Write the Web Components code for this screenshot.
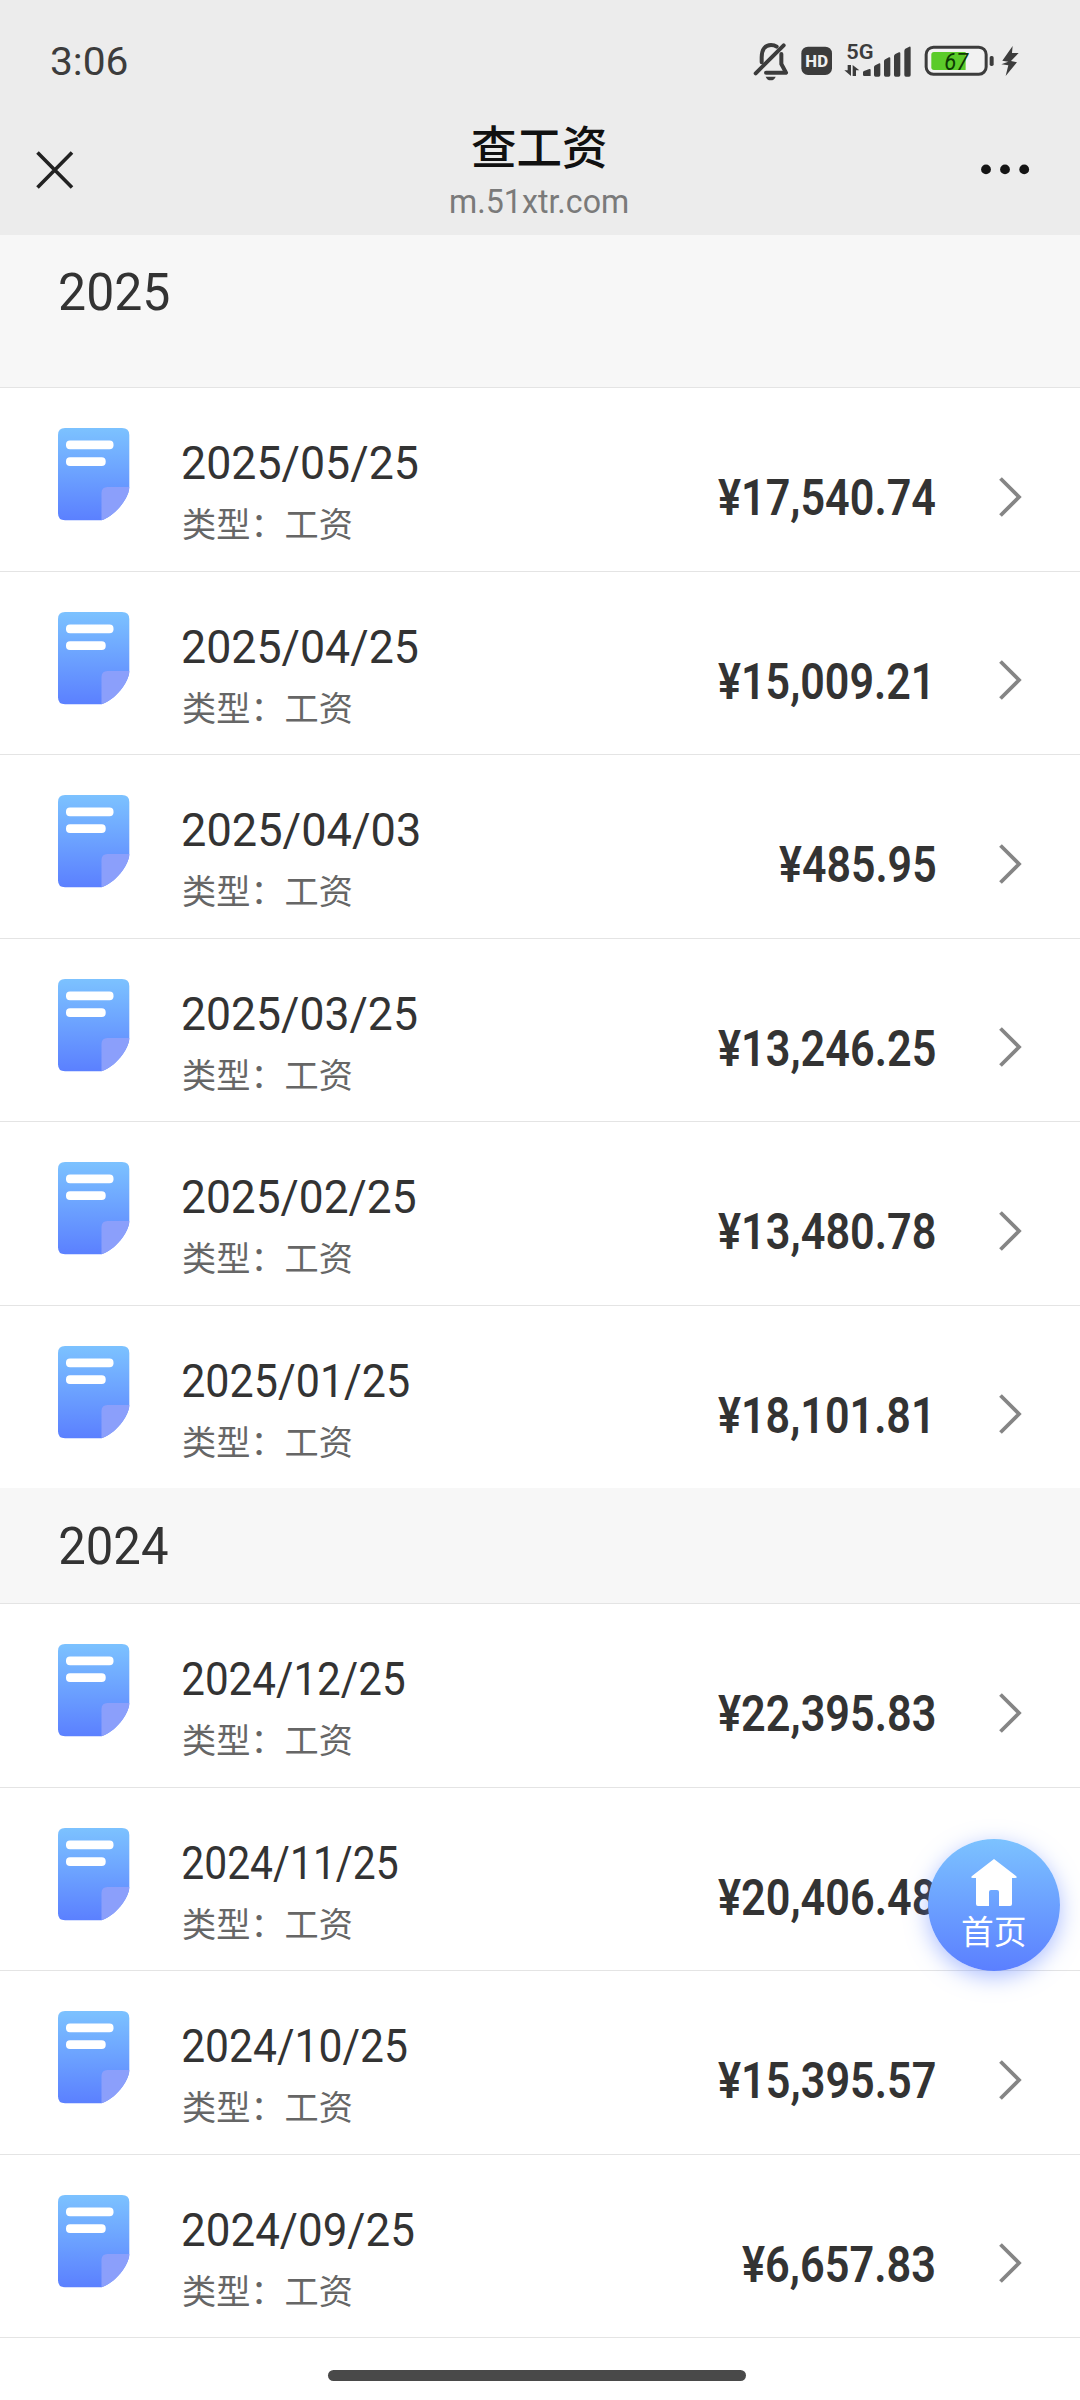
<!DOCTYPE html>
<html lang="zh-CN">
<head>
<meta charset="utf-8">
<title>查工资</title>
<style>
body{margin:0;background:#fff;width:1080px;height:2400px;overflow:hidden;font-family:Roboto,"Noto Sans CJK SC",sans-serif;color:#333}
</style>
</head>
<body>
<salary-app></salary-app>
<script>
const define=(name,html,setup)=>{
  const t=document.createElement('template');t.innerHTML=html;
  customElements.define(name,class extends HTMLElement{
    connectedCallback(){
      if(this.shadowRoot)return;
      this.attachShadow({mode:'open'}).append(t.content.cloneNode(true));
      if(setup)setup(this,this.shadowRoot);
    }
  });
};

/* Text whose visible ink is set to an exact width, starting at the box's left edge. */
const ctx=document.createElement('canvas').getContext('2d');
define('fit-text',`<style>:host{display:block;white-space:nowrap}span{display:inline-block;transform-origin:0 50%}</style><span><slot></slot></span>`,(el,root)=>{
  const cs=getComputedStyle(el);
  ctx.font=`${cs.fontWeight} ${cs.fontSize} ${cs.fontFamily}`;
  const m=ctx.measureText(el.textContent);
  const w=+el.getAttribute('width');
  const k=w/(m.actualBoundingBoxLeft+m.actualBoundingBoxRight);
  el.style.width=w+'px';
  root.querySelector('span').style.transform=`translateX(${m.actualBoundingBoxLeft*k}px) scaleX(${k})`;
});

define('status-bar',`<style>
:host{display:flex;justify-content:space-between;align-items:flex-start;height:104px;box-sizing:border-box;padding:40px 60px 0 50.5px;color:#3c3c3c}
fit-text{font-size:39px;line-height:44px;font-weight:450}
svg{display:block}
</style>
<fit-text width="76.5">3:06</fit-text>
<svg width="266.67" height="43.33" viewBox="100 60 800 130" fill="#3c3c3c">
<g fill="none" stroke="#3c3c3c" stroke-width="12" stroke-linecap="round" stroke-linejoin="round">
<path d="M108 160L192 76"/><path d="M126 127V112C126 86 138 75 154 75Q164 75 171 80M185 102V132L199 158H139"/></g>
<path d="M138 170H168Q164 181 153 181Q142 181 138 170Z"/>
<rect x="245" y="80" width="92" height="85" rx="20"/>
<text x="291" y="140" fill="#efefef" font-size="48" font-weight="800" text-anchor="middle" textLength="68" lengthAdjust="spacingAndGlyphs">HD</text>
<text x="380" y="116" font-size="60" font-weight="600" textLength="82" lengthAdjust="spacingAndGlyphs">5G</text>
<path d="M384 135H394V168L374 151H384ZM399 168V135L419 151H409V168Z"/>
<path d="M430 157Q430 154 433 153L449 147Q453 146 453 150V168H434Q430 168 430 165ZM463 142Q463 138 467 136L479 130Q482 129 482 133V165Q482 170 477 170H468Q463 170 463 165ZM493 124Q493 120 497 118L508 112Q512 111 512 115V165Q512 170 507 170H498Q493 170 493 165ZM523 109Q523 105 527 102L538 97Q542 96 542 100V165Q542 170 537 170H528Q523 170 523 165ZM554 93Q554 89 557 86L569 80Q573 79 573 83V165Q573 170 568 170H559Q554 170 554 165Z"/>
<rect x="619.5" y="81.5" width="180" height="81.5" rx="22" fill="#f2f2f2" stroke="#3c3c3c" stroke-width="9"/>
<path d="M643 96H738V150H643Q635 150 635 142V104Q635 96 643 96Z" fill="#5bcb2a"/>
<rect x="810" y="108" width="12" height="30" rx="5"/>
<text x="674" y="150" font-size="72" font-weight="400" font-style="italic" fill="#0d3a04" textLength="72" lengthAdjust="spacingAndGlyphs">67</text>
<path d="M879 78L848 122L866 125L845 133L866 136L858 168L892 127L874 123L897 99H877Z"/>
</svg>`);

define('nav-bar',`<style>
:host{display:flex;justify-content:space-between;align-items:flex-start;height:130.5px;box-sizing:border-box;padding:0 50px 0 36px}
svg{display:block}.c{margin-top:46.500px;width:108px}.m{margin-top:60px;margin-left:46px}
div{display:flex;flex-direction:column;align-items:center}
.t{font-size:46px;line-height:60px;font-weight:500;color:#111;margin-top:14px}
.u{font-size:34px;line-height:40px;color:#7a7a7a;margin-top:3px}
</style>
<svg class="c" width="108" height="38" viewBox="0 0 108 38"><path d="M1.5 1.5L36 36.5M36 1.5L1.5 36.5" stroke="#222" stroke-width="3.6" fill="none"/></svg>
<div><fit-text class="t" width="133.5">查工资</fit-text><fit-text class="u" width="176.500">m.51xtr.com</fit-text></div>
<svg class="m" width="50" height="11" viewBox="0 0 50 11" fill="#151515"><circle cx="6" cy="5.4" r="4.9"/><circle cx="25" cy="5.4" r="4.9"/><circle cx="44.2" cy="5.4" r="4.9"/></svg>`);

define('year-head',`<style>
:host{display:block;box-sizing:border-box;background:#f7f7f7;padding-left:59.5px;height:115px;padding-top:28px}
:host([first]){height:152.5px;padding-top:27px}
fit-text{font-size:52.5px;line-height:60px}
</style><div></div>`,(el,root)=>{
  root.querySelector('div').innerHTML=`<fit-text width="${el.getAttribute('w')}">${el.getAttribute('year')}</fit-text>`;
});

define('doc-icon',`<style>:host,svg{display:block}</style>
<svg width="72" height="93" viewBox="0 0 72 93"><defs><linearGradient id="g" x2="0" y2="1"><stop stop-color="#7cc2ff"/><stop offset="1" stop-color="#5b80ff"/></linearGradient></defs>
<path d="M7 0H64Q71.3 0 71.3 7V59C71.3 70 57 88 43.5 92.3H7Q0 92.3 0 85.3V7Q0 0 7 0Z" fill="url(#g)"/>
<path d="M71.3 59C71.3 70 57 88 43.5 92.3V65Q43.5 59 49.5 59Z" fill="#8b9ffb"/>
<rect x="8" y="12.5" width="47.5" height="8.8" rx="4" fill="#fff"/><rect x="8" y="29.2" width="39.7" height="8.8" rx="4" fill="#fff"/></svg>`);

define('salary-row',`<style>
:host{display:flex;align-items:flex-start;height:183.5px;box-sizing:border-box;border-top:1px solid #e4e4e4;background:#fff;padding-left:58px;padding-right:58px}
doc-icon{margin-top:40px;width:125px}
.d{flex:1}
.date{font-size:46.5px;line-height:54px;margin-top:48px}
.type{font-size:34.5px;line-height:44px;color:#666;margin-top:13px}
.amt{font-size:50px;line-height:56px;font-weight:600;margin-top:82px}
svg{display:block;margin-top:88.5px;margin-left:64px}
</style><doc-icon></doc-icon><div class="d"></div>
<span class="a"></span>
<svg width="23" height="40" viewBox="0 0 23 40"><path d="M1.5 1.5L20 20L1.5 38.5" fill="none" stroke="#858585" stroke-width="3.8"/></svg>`,(el,root)=>{
  const [date,dw,amt,al,ar]=el.data;
  root.querySelector('.d').innerHTML=`<fit-text class="date" width="${dw}">${date}</fit-text><fit-text class="type" width="168.5">类型：工资</fit-text>`;
  const a=root.querySelector('.a');
  a.style.marginRight=(935-ar)+'px';
  a.innerHTML=`<fit-text class="amt" width="${ar-al}">${amt}</fit-text>`;
});

define('home-button',`<style>
:host{position:absolute;left:928px;top:1839px;width:132px;height:132px;border-radius:50%;background:linear-gradient(#7cc2ff,#5b7fff);box-shadow:0 6px 22px rgba(91,128,255,.5);display:flex;flex-direction:column;align-items:center;box-sizing:border-box;padding-top:20px;color:#fff}
svg{display:block;margin-left:-1px}
fit-text{font-size:32.5px;line-height:40px;margin-top:7px;margin-left:-2px}
</style>
<svg width="46" height="47" viewBox="0 0 46 47"><path d="M23 0L45 17Q47 19 44 19H41V45Q41 47 39 47H28V33Q28 31 26 31H20Q18 31 18 33V47H7Q5 47 5 45V19H2Q-1 19 1 17Z" fill="#fff"/></svg>
<fit-text width="63">首页</fit-text>`);

const rows25=[
['2025/05/25',234.8,'¥17,540.74',717.8,935.3],['2025/04/25',234.8,'¥15,009.21',717.8,927.8],
['2025/04/03',236.2,'¥485.95',778.5,934.8],['2025/03/25',233.8,'¥13,246.25',717.8,934.8],
['2025/02/25',232.5,'¥13,480.78',717.8,935],['2025/01/25',226.2,'¥18,101.81',717.8,928]];
const rows24=[
['2024/12/25',221.6,'¥22,395.83',717.8,934],['2024/11/25',214.6,'¥20,406.48',717.8,934.8],
['2024/10/25',223.8,'¥15,395.57',717.8,935],['2024/09/25',230.8,'¥6,657.83',742.2,934]];

define('salary-app',`<style>
:host{display:flex;flex-direction:column;position:relative;height:2400px}
header{background:#ececec}
main{display:block}
.end{border-top:1px solid #e4e4e4;height:62px;display:flex;justify-content:center;align-items:flex-start;box-sizing:border-box;padding-top:32px;padding-right:6px}
.end i{width:418px;height:11px;border-radius:5.5px;background:#494949}
</style>
<header><status-bar></status-bar><nav-bar></nav-bar></header>
<main></main>
<div class="end"><i></i></div>
<home-button></home-button>`,(el,root)=>{
  const main=root.querySelector('main');
  const head=(y,w,first)=>{const h=document.createElement('year-head');h.setAttribute('year',y);h.setAttribute('w',w);if(first)h.setAttribute('first','');main.append(h)};
  const add=list=>list.forEach(d=>{const r=document.createElement('salary-row');r.data=d;main.append(r)});
  head('2025',109,true);add(rows25);head('2024',108);add(rows24);
});
</script>
</body>
</html>
